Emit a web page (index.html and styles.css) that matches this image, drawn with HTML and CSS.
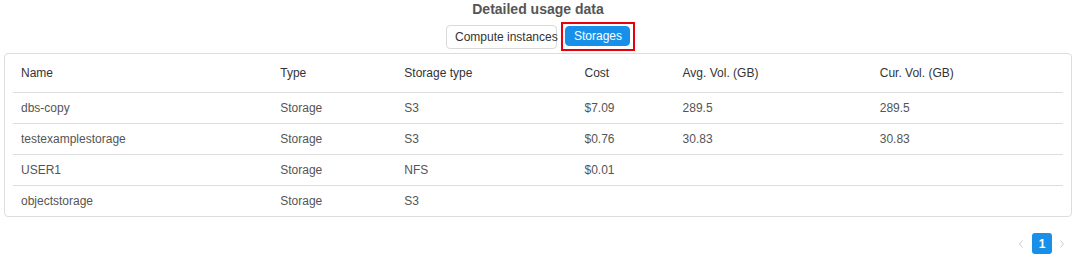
FILE: index.html
```html
<!DOCTYPE html>
<html lang="en">
<head>
<meta charset="utf-8">
<title>Detailed usage data</title>
<link rel="stylesheet" href="styles.css">
</head>
<body>
  <h1 class="title">Detailed usage data</h1>
  <div class="toolbar">
    <button class="btn btn-default" type="button">Compute instances</button>
    <div class="highlight">
      <button class="btn btn-primary" type="button">Storages</button>
    </div>
  </div>
  <div class="card">
    <table class="usage">
      <colgroup>
        <col class="c-name"><col class="c-type"><col class="c-stype"><col class="c-cost"><col class="c-avg"><col class="c-cur">
      </colgroup>
      <thead>
        <tr><th>Name</th><th>Type</th><th>Storage type</th><th>Cost</th><th>Avg. Vol. (GB)</th><th>Cur. Vol. (GB)</th></tr>
      </thead>
      <tbody>
        <tr><td>dbs-copy</td><td>Storage</td><td>S3</td><td>$7.09</td><td>289.5</td><td>289.5</td></tr>
        <tr><td>testexamplestorage</td><td>Storage</td><td>S3</td><td>$0.76</td><td>30.83</td><td>30.83</td></tr>
        <tr><td>USER1</td><td>Storage</td><td>NFS</td><td>$0.01</td><td></td><td></td></tr>
        <tr><td>objectstorage</td><td>Storage</td><td>S3</td><td></td><td></td><td></td></tr>
      </tbody>
    </table>
  </div>
  <nav class="pager">
    <span class="pager-arrow prev"><svg width="6" height="8" viewBox="0 0 6 8"><polyline points="4.5,0.5 1.5,4 4.5,7.5" fill="none" stroke="#ccc" stroke-width="1"/></svg></span>
    <span class="pager-item active">1</span>
    <span class="pager-arrow next"><svg width="6" height="8" viewBox="0 0 6 8"><polyline points="1.5,0.5 4.5,4 1.5,7.5" fill="none" stroke="#ccc" stroke-width="1"/></svg></span>
  </nav>
</body>
</html>
```
FILE: styles.css
```css
* { box-sizing: border-box; }

html, body { background: #fff; }

body {
  margin: 0;
  padding: 0 4px;
  font-family: "Liberation Sans", Arial, sans-serif;
  font-size: 12px;
  color: #555;
}

.title {
  margin: 0;
  text-align: center;
  font-size: 14px;
  font-weight: bold;
  line-height: 18px;
  color: #555;
}

.toolbar {
  display: flex;
  justify-content: center;
  align-items: center;
  gap: 4px;
  margin-top: 4px;
  padding-left: 5px;
  height: 29px;
}

.btn {
  font-family: inherit;
  font-size: 12px;
  margin: 0;
  cursor: pointer;
  border-radius: 4px;
  white-space: nowrap;
  overflow: visible;
}

.btn-default {
  width: 111px;
  height: 24px;
  padding: 0 0 0 8px;
  text-align: left;
  background: #fff;
  border: 1px solid #d9d9d9;
  color: #333;
}

.highlight {
  border: 2px solid #e8000b;
  padding: 2px 3px 3px 2px;
  display: flex;
}

.btn-primary {
  width: 65px;
  height: 20px;
  padding: 0 8px;
  background: #1890ea;
  border: 1px solid #1890ea;
  color: #fff;
}

.card {
  margin-top: 2px;
  border: 1px solid #ddd;
  border-radius: 4px;
  padding: 0 8px;
}

.usage {
  width: 100%;
  table-layout: fixed;
  border-collapse: separate;
  border-spacing: 0;
}

.c-name { width: 259px; }
.c-type { width: 124px; }
.c-stype { width: 180px; }
.c-cost { width: 98px; }
.c-avg { width: 197px; }
.c-cur { width: 191px; }

.usage th,
.usage td {
  padding: 0 8px;
  text-align: left;
  vertical-align: middle;
  border-bottom: 1px solid #ddd;
  white-space: nowrap;
}

.usage th {
  height: 39px;
  font-weight: normal;
  color: #333;
}

.usage td {
  height: 31px;
  color: #555;
}

.usage tbody tr:last-child td { border-bottom: 0; height: 30px; }

.pager {
  display: flex;
  justify-content: flex-end;
  align-items: center;
  margin-top: 16px;
}

.pager-arrow {
  width: 20px;
  height: 21px;
  display: flex;
  align-items: center;
  justify-content: center;
}

.pager-arrow.prev { margin-right: 1px; }

.pager-item {
  width: 20px;
  height: 21px;
  display: flex;
  align-items: center;
  justify-content: center;
  border-radius: 3px;
  font-weight: bold;
  font-size: 12px;
}

.pager-item.active {
  background: #1890ea;
  color: #fff;
}
```
